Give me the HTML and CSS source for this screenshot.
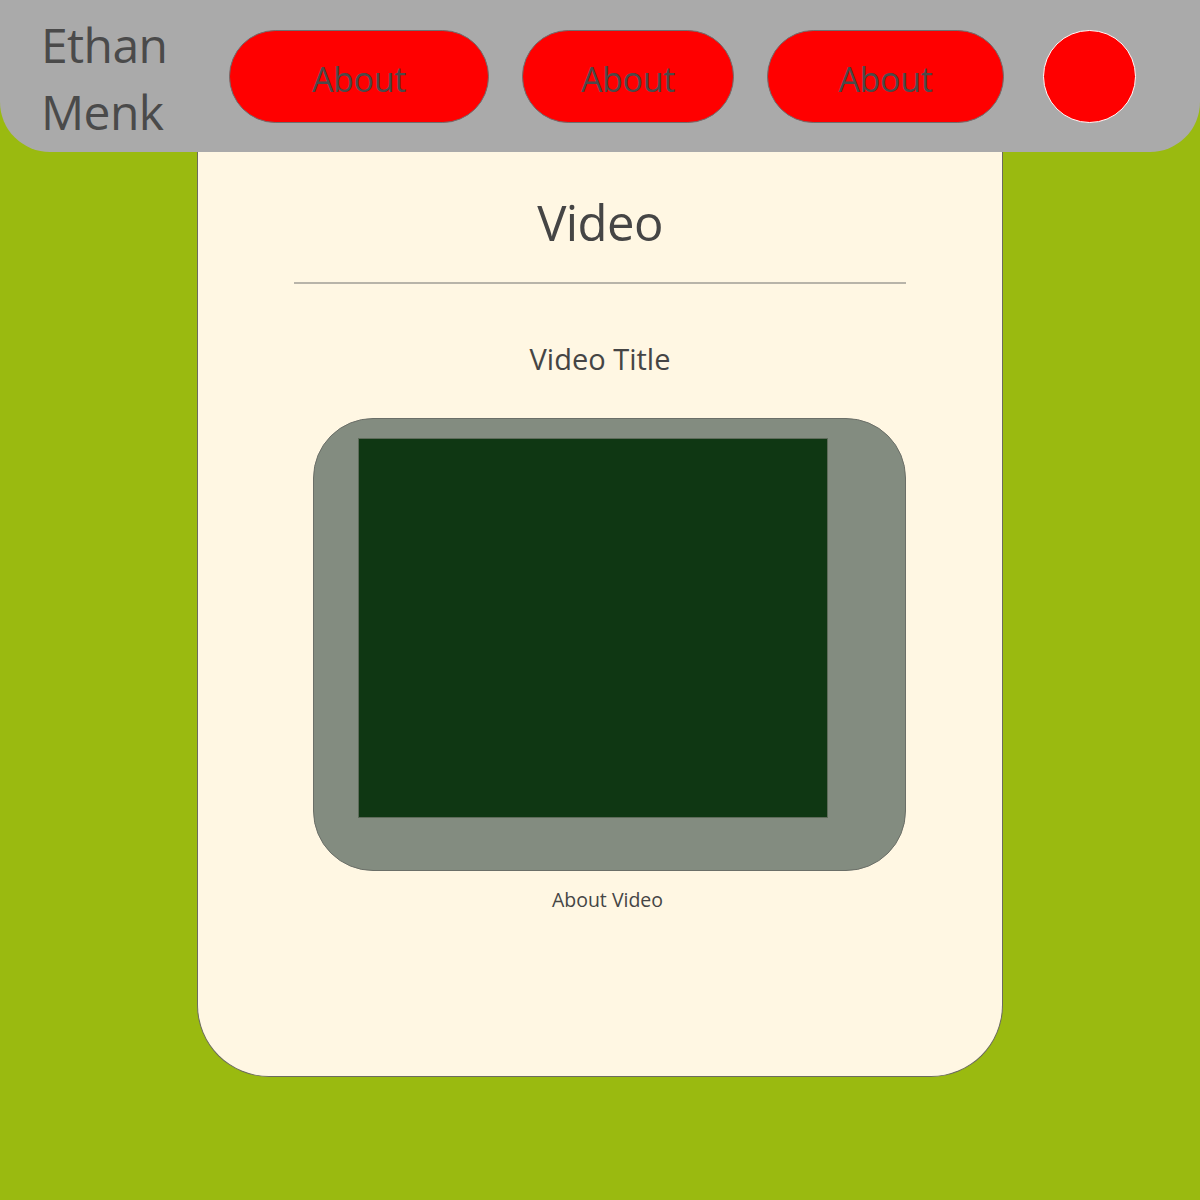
FILE: index.html
```html
<!DOCTYPE html>
<html lang="en">
<head>
<meta charset="utf-8">
<title>Ethan Menk - Video</title>
<link rel="stylesheet" href="styles.css">
</head>
<body>
<header class="site-header">
  <div class="brand">Ethan<br>Menk</div>
  <nav class="nav">
    <a class="pill pill-1" href="#">About</a>
    <a class="pill pill-2" href="#">About</a>
    <a class="pill pill-3" href="#">About</a>
    <span class="dot"></span>
  </nav>
</header>
<main class="card">
  <h1 class="title">Video</h1>
  <hr class="rule">
  <h2 class="subtitle">Video Title</h2>
  <figure class="media">
    <div class="frame">
      <div class="screen"></div>
    </div>
    <figcaption class="caption">About Video</figcaption>
  </figure>
</main>
</body>
</html>
```
FILE: styles.css
```css
* { box-sizing: border-box; }
html, body { margin: 0; padding: 0; }
body {
  background: #9aba10;
  font-family: "Open Sans", "Noto Sans", sans-serif;
  color: #464646;
  height: 1200px;
  overflow: hidden;
}
.site-header {
  height: 152px;
  background: #aaaaaa;
  border-radius: 0 0 50px 50px;
  display: flex;
  align-items: center;
  padding-left: 41px;
}
.brand {
  width: 188px;
  font-size: 48px;
  letter-spacing: -0.6px;
  line-height: 67px;
  color: #4a4a4a;
  margin-top: 3px;
}
.nav {
  display: flex;
  align-items: center;
}
.pill {
  height: 93px;
  border-radius: 47px;
  background: #ff0000;
  border: 1px solid #6e6e6e;
  color: #4a4a4a;
  text-decoration: none;
  font-size: 34px;
  letter-spacing: -0.3px;
  display: flex;
  align-items: center;
  justify-content: center;
  padding-top: 5px;
}
.pill-1 { width: 260px; margin-right: 33px; }
.pill-2 { width: 212px; margin-right: 33px; }
.pill-3 { width: 237px; margin-right: 39px; }
.dot {
  width: 93px;
  height: 93px;
  border-radius: 50%;
  background: #ff0000;
  border: 1px solid #ffffff;
}
.card {
  width: 806px;
  height: 925px;
  margin: 0 auto;
  background: #fff7e3;
  border: 1px solid #6b6b5e;
  border-top: none;
  border-radius: 0 0 72px 72px;
  display: flex;
  flex-direction: column;
  align-items: center;
}
.title {
  margin: 39px 0 0;
  font-size: 49px;
  letter-spacing: -0.6px;
  line-height: 62px;
  font-weight: 400;
  color: #454545;
}
.rule {
  width: 612px;
  height: 2px;
  margin: 29px 0 0;
  border: none;
  background: #b8b4a9;
}
.subtitle {
  margin: 57px 0 0;
  font-size: 29px;
  line-height: 36px;
  font-weight: 400;
  color: #454545;
}
.media {
  margin: 41px 0 0 19px;
  width: 593px;
  display: flex;
  flex-direction: column;
  align-items: center;
}
.frame {
  width: 593px;
  height: 453px;
  background: #838c80;
  border: 1px solid #6b6f68;
  border-radius: 60px;
  padding: 19px 0 0 44px;
  align-self: stretch;
}
.screen {
  width: 470px;
  height: 380px;
  background: #0f3713;
  border: 1px solid #5e6b5a;
}
.caption {
  margin-top: 17px;
  font-size: 19.5px;
  line-height: 24px;
  color: #454545;
  margin-left: -4px;
}
```
